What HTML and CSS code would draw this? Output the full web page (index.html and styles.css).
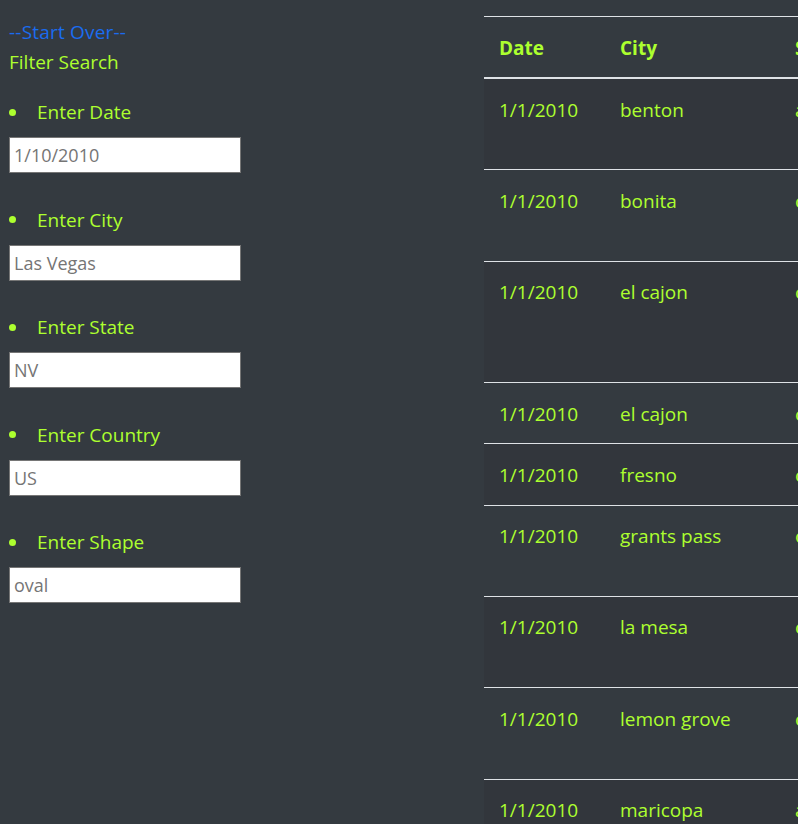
FILE: index.html
```html
<!DOCTYPE html>
<html lang="en">
<head>
<meta charset="utf-8">
<title>UFO Sightings</title>
<link rel="stylesheet" href="styles.css">
</head>
<body>
<div class="page">
  <aside class="filters">
    <a class="start-over" href="#">--Start Over--</a>
    <div class="filter-title">Filter Search</div>
    <ul class="filter-list">
      <li class="filter-item">
        <label class="filter-label" for="date">Enter Date</label>
        <input class="filter-input" id="date" type="text" placeholder="1/10/2010">
      </li>
      <li class="filter-item">
        <label class="filter-label" for="city">Enter City</label>
        <input class="filter-input" id="city" type="text" placeholder="Las Vegas">
      </li>
      <li class="filter-item">
        <label class="filter-label" for="state">Enter State</label>
        <input class="filter-input" id="state" type="text" placeholder="NV">
      </li>
      <li class="filter-item">
        <label class="filter-label" for="country">Enter Country</label>
        <input class="filter-input" id="country" type="text" placeholder="US">
      </li>
      <li class="filter-item">
        <label class="filter-label" for="shape">Enter Shape</label>
        <input class="filter-input" id="shape" type="text" placeholder="oval">
      </li>
    </ul>
  </aside>
  <main class="results">
    <table class="ufo-table">
      <colgroup>
        <col class="c-date"><col class="c-city"><col class="c-state"><col class="c-country"><col class="c-shape"><col class="c-duration"><col class="c-comments">
      </colgroup>
      <thead>
        <tr><th>Date</th><th>City</th><th>State</th><th>Country</th><th>Shape</th><th>Duration</th><th>Comments</th></tr>
      </thead>
      <tbody>
        <tr><td>1/1/2010</td><td>benton</td><td>ar</td><td>us</td><td>circle</td><td>5 mins.</td><td>Bright red light moving north<br>to north west from Benton.</td></tr>
        <tr><td>1/1/2010</td><td>bonita</td><td>ca</td><td>us</td><td>light</td><td>13 minutes</td><td>Six bright orange lights seen<br>hovering over the hills.</td></tr>
        <tr><td>1/1/2010</td><td>el cajon</td><td>ca</td><td>us</td><td>triangle</td><td>3 minutes</td><td>Bright orange lights in a triangle<br>formation drifting slowly east,<br>then fading one at a time.</td></tr>
        <tr><td>1/1/2010</td><td>el cajon</td><td>ca</td><td>us</td><td>light</td><td>1 hour</td><td>Four orange lights in the sky.</td></tr>
        <tr><td>1/1/2010</td><td>fresno</td><td>ca</td><td>us</td><td>fireball</td><td>20 seconds</td><td>Orange glowing object seen.</td></tr>
        <tr><td>1/1/2010</td><td>grants pass</td><td>or</td><td>us</td><td>light</td><td>2 minutes</td><td>Two amber lights moving slowly<br>across the night sky.</td></tr>
        <tr><td>1/1/2010</td><td>la mesa</td><td>ca</td><td>us</td><td>fireball</td><td>5 minutes</td><td>Red orange fireballs rising<br>over La Mesa at midnight.</td></tr>
        <tr><td>1/1/2010</td><td>lemon grove</td><td>ca</td><td>us</td><td>circle</td><td>10 minutes</td><td>Several orange circles flying<br>in a line over Lemon Grove.</td></tr>
        <tr><td>1/1/2010</td><td>maricopa</td><td>az</td><td>us</td><td>light</td><td>15 minutes</td><td>Red lights hovering low<br>south of Maricopa.</td></tr>
      </tbody>
    </table>
  </main>
</div>
</body>
</html>
```
FILE: styles.css
```css
html, body {
  margin: 0;
  padding: 0;
  overflow: hidden;
  background: #343a40;
}

body {
  font-family: "Open Sans", "Noto Sans", sans-serif;
  font-size: 19px;
  line-height: 30px;
  color: #adff2f;
}

.page {
  display: flex;
  align-items: flex-start;
  width: 1400px;
}

.filters {
  width: 475px;
  flex: none;
  padding: 17px 0 0 9px;
}

.start-over {
  display: block;
  color: #1a6cf0;
  text-decoration: none;
  letter-spacing: 0.2px;
}

.filter-title {
  display: block;
}

.filter-list {
  list-style: none;
  margin: 20px 0 0;
  padding: 0;
}

.filter-item {
  display: flex;
  flex-direction: column;
  align-items: flex-start;
  margin-bottom: 31.5px;
}

.filter-label {
  display: flex;
  align-items: center;
  gap: 21px;
}

.filter-label::before {
  content: "";
  width: 7px;
  height: 7px;
  border-radius: 50%;
  background: #adff2f;
}

.filter-input {
  box-sizing: border-box;
  margin-top: 10px;
  width: 232px;
  height: 36px;
  padding: 0 4px;
  border: 1px solid #767676;
  background: #fff;
  font-family: "Open Sans", "Noto Sans", sans-serif;
  font-size: 18px;
  color: #333;
  outline: none;
}

.filter-input::placeholder {
  color: #757575;
}

.results {
  flex: none;
  padding-top: 16px;
}

.ufo-table {
  border-collapse: collapse;
  table-layout: fixed;
  width: 1196px;
  line-height: 30.15px;
}

.c-date { width: 121px; }
.c-city { width: 175px; }
.c-state { width: 100px; }
.c-country { width: 110px; }
.c-shape { width: 120px; }
.c-duration { width: 150px; }
.c-comments { width: 420px; }

.ufo-table th,
.ufo-table td {
  padding: 15.5px 15px 14.5px;
  text-align: left;
  vertical-align: top;
  border-top: 1px solid #dee2e6;
  white-space: nowrap;
}

.ufo-table th {
  font-weight: 700;
  border-bottom: 2px solid #dee2e6;
}

.ufo-table tbody tr:nth-child(odd) {
  background: #32363c;
}
```
